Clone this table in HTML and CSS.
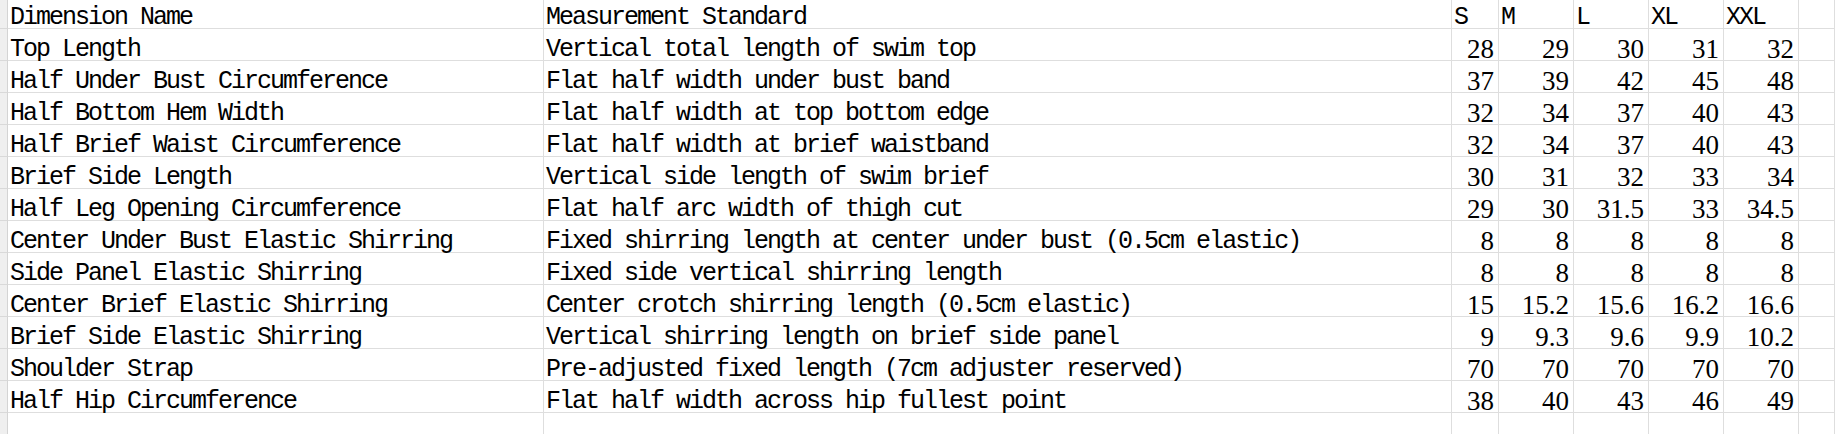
FILE: index.html
```html
<!DOCTYPE html>
<html lang="en">
<head>
<meta charset="utf-8">
<title>Swimsuit Size Chart</title>
<link rel="stylesheet" href="styles.css">
</head>
<body>
<div class="sheet">
  <div class="row">
    <div class="gut"></div>
    <div class="cell">Dimension Name</div>
    <div class="cell">Measurement Standard</div>
    <div class="cell">S</div>
    <div class="cell">M</div>
    <div class="cell">L</div>
    <div class="cell">XL</div>
    <div class="cell">XXL</div>
    <div class="cell"></div>
  </div>
  <div class="row">
    <div class="gut"></div>
    <div class="cell">Top Length</div>
    <div class="cell">Vertical total length of swim top</div>
    <div class="cell num">28</div><div class="cell num">29</div><div class="cell num">30</div><div class="cell num">31</div><div class="cell num">32</div>
    <div class="cell"></div>
  </div>
  <div class="row">
    <div class="gut"></div>
    <div class="cell">Half Under Bust Circumference</div>
    <div class="cell">Flat half width under bust band</div>
    <div class="cell num">37</div><div class="cell num">39</div><div class="cell num">42</div><div class="cell num">45</div><div class="cell num">48</div>
    <div class="cell"></div>
  </div>
  <div class="row">
    <div class="gut"></div>
    <div class="cell">Half Bottom Hem Width</div>
    <div class="cell">Flat half width at top bottom edge</div>
    <div class="cell num">32</div><div class="cell num">34</div><div class="cell num">37</div><div class="cell num">40</div><div class="cell num">43</div>
    <div class="cell"></div>
  </div>
  <div class="row">
    <div class="gut"></div>
    <div class="cell">Half Brief Waist Circumference</div>
    <div class="cell">Flat half width at brief waistband</div>
    <div class="cell num">32</div><div class="cell num">34</div><div class="cell num">37</div><div class="cell num">40</div><div class="cell num">43</div>
    <div class="cell"></div>
  </div>
  <div class="row">
    <div class="gut"></div>
    <div class="cell">Brief Side Length</div>
    <div class="cell">Vertical side length of swim brief</div>
    <div class="cell num">30</div><div class="cell num">31</div><div class="cell num">32</div><div class="cell num">33</div><div class="cell num">34</div>
    <div class="cell"></div>
  </div>
  <div class="row">
    <div class="gut"></div>
    <div class="cell">Half Leg Opening Circumference</div>
    <div class="cell">Flat half arc width of thigh cut</div>
    <div class="cell num">29</div><div class="cell num">30</div><div class="cell num">31.5</div><div class="cell num">33</div><div class="cell num">34.5</div>
    <div class="cell"></div>
  </div>
  <div class="row">
    <div class="gut"></div>
    <div class="cell">Center Under Bust Elastic Shirring</div>
    <div class="cell">Fixed shirring length at center under bust (0.5cm elastic)</div>
    <div class="cell num">8</div><div class="cell num">8</div><div class="cell num">8</div><div class="cell num">8</div><div class="cell num">8</div>
    <div class="cell"></div>
  </div>
  <div class="row">
    <div class="gut"></div>
    <div class="cell">Side Panel Elastic Shirring</div>
    <div class="cell">Fixed side vertical shirring length</div>
    <div class="cell num">8</div><div class="cell num">8</div><div class="cell num">8</div><div class="cell num">8</div><div class="cell num">8</div>
    <div class="cell"></div>
  </div>
  <div class="row">
    <div class="gut"></div>
    <div class="cell">Center Brief Elastic Shirring</div>
    <div class="cell">Center crotch shirring length (0.5cm elastic)</div>
    <div class="cell num">15</div><div class="cell num">15.2</div><div class="cell num">15.6</div><div class="cell num">16.2</div><div class="cell num">16.6</div>
    <div class="cell"></div>
  </div>
  <div class="row">
    <div class="gut"></div>
    <div class="cell">Brief Side Elastic Shirring</div>
    <div class="cell">Vertical shirring length on brief side panel</div>
    <div class="cell num">9</div><div class="cell num">9.3</div><div class="cell num">9.6</div><div class="cell num">9.9</div><div class="cell num">10.2</div>
    <div class="cell"></div>
  </div>
  <div class="row">
    <div class="gut"></div>
    <div class="cell">Shoulder Strap</div>
    <div class="cell">Pre-adjusted fixed length (7cm adjuster reserved)</div>
    <div class="cell num">70</div><div class="cell num">70</div><div class="cell num">70</div><div class="cell num">70</div><div class="cell num">70</div>
    <div class="cell"></div>
  </div>
  <div class="row">
    <div class="gut"></div>
    <div class="cell">Half Hip Circumference</div>
    <div class="cell">Flat half width across hip fullest point</div>
    <div class="cell num">38</div><div class="cell num">40</div><div class="cell num">43</div><div class="cell num">46</div><div class="cell num">49</div>
    <div class="cell"></div>
  </div>
  <div class="row">
    <div class="gut"></div>
    <div class="cell"></div><div class="cell"></div>
    <div class="cell"></div><div class="cell"></div><div class="cell"></div><div class="cell"></div><div class="cell"></div>
    <div class="cell"></div>
  </div>
</div>
</body>
</html>
```

FILE: styles.css
```css
html, body {
  margin: 0;
  padding: 0;
  background: #ffffff;
  overflow: hidden;
}

.sheet {
  margin-top: -3px;
  font-family: "Liberation Mono", "Noto Sans CJK SC", monospace;
  font-size: 25px;
  letter-spacing: -2px;
  color: #000000;
}

.row {
  display: grid;
  grid-template-columns: 8px 536px 908px 47px 75px 75px 75px 75px 1fr;
  height: 32px;
}

.gut {
  background: #efefef;
  border-right: 1px solid #d4d4d4;
  border-bottom: 1px solid #d9d9d9;
  box-sizing: border-box;
}

.cell {
  box-sizing: border-box;
  height: 32px;
  border-right: 1px solid #dedede;
  border-bottom: 1px solid #dedede;
  padding: 11px 0 0 2px;
  line-height: 20px;
  white-space: nowrap;
  overflow: visible;
}

.cell.num {
  font-family: "Liberation Serif", "Noto Sans CJK SC", serif;
  font-size: 27px;
  letter-spacing: 0;
  text-align: right;
  padding: 10px 4px 0 0;
}
```
